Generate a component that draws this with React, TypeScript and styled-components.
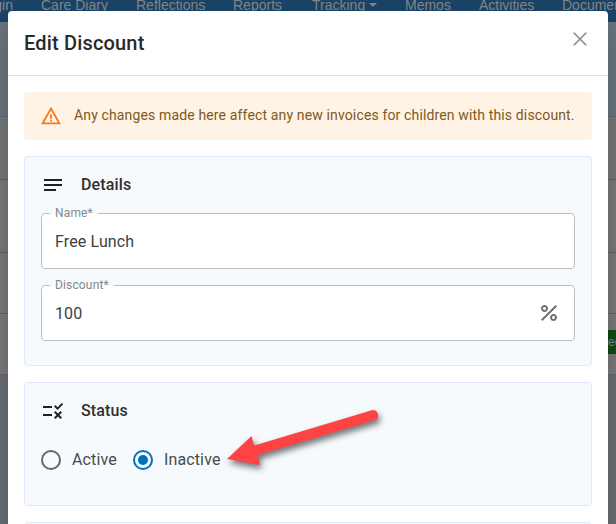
import React from "react";
import styled, { createGlobalStyle } from "styled-components";
import { MdNotes, MdPercent, MdRule, MdWarningAmber } from "react-icons/md";

const GlobalStyle = createGlobalStyle`
  *, *::before, *::after { box-sizing: border-box; }
  body { margin: 0; overflow: hidden; font-family: Roboto, sans-serif; }
`;

const Page = styled.div`
  position: relative;
  width: 616px;
  height: 524px;
  overflow: hidden;
  background: #6a7074;
`;

const NavBar = styled.nav`
  display: flex;
  gap: 28px;
  height: 22px;
  overflow: hidden;
  background: #1b4569;
  color: #84888b;
  font: 14px/20px "Liberation Sans", Arial, sans-serif;
  white-space: nowrap;
`;

const NavItem = styled.a<{ $width: number }>`
  display: flex;
  flex: 0 0 ${(p) => p.$width}px;
  min-width: 0;
  height: 20px;
  margin-top: -5px;
`;

const FirstNavItem = styled(NavItem)`
  justify-content: flex-end;
`;

const Caret = styled.span`
  margin: 8px 0 0 4px;
  width: 8px;
  height: 4px;
  border: 4px solid transparent;
  border-top-color: #84888b;
  border-bottom: 0;
`;

const Band = styled.div<{ $height: number; $color: string; $line?: string }>`
  display: flex;
  justify-content: flex-end;
  align-items: flex-start;
  height: ${(p) => p.$height}px;
  background: ${(p) => p.$color};
  border-bottom: 1px solid ${(p) => p.$line ?? "#5f6061"};
`;

const GreenButton = styled.button`
  width: 40px;
  height: 24px;
  margin: 16px -24px 0 0;
  padding: 0 0 0 8px;
  border: 0;
  background: #134a16;
  color: #858a8d;
  font: 12px/24px "Liberation Sans", Arial, sans-serif;
  text-align: left;
`;

const Dialog = styled.section`
  position: absolute;
  top: 11px;
  left: 8px;
  width: 600px;
  height: 560px;
  border-radius: 4px;
  background: #fff;
  box-shadow: 0 11px 15px -7px rgba(0, 0, 0, 0.2), 0 24px 38px 3px rgba(0, 0, 0, 0.08),
    0 9px 46px 8px rgba(0, 0, 0, 0.05);
`;

const DialogHeader = styled.header`
  display: flex;
  justify-content: space-between;
  height: 65px;
  padding: 16px 20px 0 16px;
  border-bottom: 1px solid #e0e0e0;
`;

const Title = styled.h1`
  margin: 0;
  color: #2a2a2a;
  font-size: 20px;
  font-weight: 500;
  line-height: 32px;
  letter-spacing: 0.17px;
`;

const CloseButton = styled.button`
  display: flex;
  width: 16px;
  height: 16px;
  margin-top: 4px;
  padding: 0;
  border: 0;
  background: none;
`;

const DialogBody = styled.div`
  display: flex;
  flex-direction: column;
  gap: 16px;
  padding: 16px;
`;

const Alert = styled.div`
  display: flex;
  align-items: center;
  gap: 12px;
  height: 48px;
  padding: 0 16px;
  border-radius: 4px;
  background: #fff3e5;
  color: #805820;
  font-size: 14px;
  letter-spacing: 0.142px;
  white-space: nowrap;

  svg { color: #f47c20; flex: none; }
`;

const AlertText = styled.span`
  padding-bottom: 2px;
`;

const Card = styled.section<{ $height: number }>`
  flex: none;
  height: ${(p) => p.$height}px;
  padding: 16px;
  border: 1px solid #dfe8ff;
  border-radius: 4px;
  background: #f6fafd;
`;

const CardHeading = styled.h2`
  display: flex;
  align-items: center;
  gap: 16px;
  height: 24px;
  margin: 0;
  color: #212121;
  font-size: 16px;
  font-weight: 500;
  letter-spacing: 0.13px;
`;

const HeadingText = styled.span`
  padding-bottom: 2px;
  color: #303030;
`;

const FieldList = styled.div`
  display: flex;
  flex-direction: column;
  gap: 16px;
  margin-top: 16px;
`;

const Field = styled.label`
  position: relative;
  display: flex;
  align-items: center;
  justify-content: space-between;
  height: 56px;
  padding: 0 13px;
  border: 1px solid #bdbdbd;
  border-radius: 4px;
  background: #fff;
  color: #404040;
  font-size: 16px;
  letter-spacing: 0.13px;

  svg { color: #707070; }
`;

const FieldLabel = styled.span`
  position: absolute;
  top: -9px;
  left: 8px;
  padding: 0 5px;
  background: linear-gradient(#f6fafd 0 9px, #fff 9px);
  color: #85888a;
  font-size: 12px;
  line-height: 16px;
  letter-spacing: 0.15px;
`;

const RadioGroup = styled.div`
  display: flex;
  gap: 16px;
  margin-top: 26px;
`;

const RadioOption = styled.label`
  display: flex;
  align-items: center;
  gap: 11px;
  height: 22px;
  color: #4a4a4a;
  font-size: 16px;
  letter-spacing: 0.14px;
`;

const RadioText = styled.span`
  padding-bottom: 2px;
`;

const RadioMark = styled.span<{ $checked?: boolean }>`
  display: grid;
  place-items: center;
  width: 20px;
  height: 20px;
  border: 2px solid ${(p) => (p.$checked ? "#0071bc" : "#666")};
  border-radius: 50%;

  &::after {
    content: "";
    width: 10px;
    height: 10px;
    border-radius: 50%;
    background: ${(p) => (p.$checked ? "#0071bc" : "transparent")};
  }
`;

const Pointer = styled.svg`
  position: absolute;
  top: 400px;
  left: 220px;
  filter: drop-shadow(2px 4px 3px rgba(0, 0, 0, 0.55));
`;

const navItems = [
  { label: "Care Diary", width: 67 },
  { label: "Reflections", width: 69 },
  { label: "Reports", width: 51 },
  { label: "Tracking", width: 65, menu: true },
  { label: "Memos", width: 46 },
  { label: "Activities", width: 55 },
  { label: "Documents", width: 72 },
];

export default function App() {
  return (
    <Page>
      <GlobalStyle />
      <NavBar>
        <FirstNavItem $width={13}>Login</FirstNavItem>
        {navItems.map((item) => (
          <NavItem key={item.label} $width={item.width}>
            {item.label}
            {item.menu && <Caret />}
          </NavItem>
        ))}
      </NavBar>
      <Band $height={95} $color="#6a757d" $line="#5d697d" />
      <Band $height={63} $color="#767878" />
      <Band $height={73} $color="#797979" />
      <Band $height={61} $color="#7a7a7a" />
      <Band $height={61} $color="#7a7a7a" $line="#616877">
        <GreenButton>ed</GreenButton>
      </Band>

      <Dialog role="dialog" aria-label="Edit Discount">
        <DialogHeader>
          <Title>Edit Discount</Title>
          <CloseButton aria-label="Close">
            <svg width="16" height="16" viewBox="0 0 16 16">
              <path d="M1.7 1.7 14.3 14.3M14.3 1.7 1.7 14.3" stroke="#999" strokeWidth="1.8" />
            </svg>
          </CloseButton>
        </DialogHeader>
        <DialogBody>
          <Alert>
            <MdWarningAmber size={22} />
            <AlertText>Any changes made here affect any new invoices for children with this discount.</AlertText>
          </Alert>
          <Card $height={210}>
            <CardHeading>
              <MdNotes size={24} />
              <HeadingText>Details</HeadingText>
            </CardHeading>
            <FieldList>
              <Field>
                <FieldLabel>Name*</FieldLabel>
                Free Lunch
              </Field>
              <Field>
                <FieldLabel>Discount*</FieldLabel>
                100
                <MdPercent size={24} />
              </Field>
            </FieldList>
          </Card>
          <Card $height={124}>
            <CardHeading>
              <MdRule size={24} />
              <HeadingText>Status</HeadingText>
            </CardHeading>
            <RadioGroup>
              <RadioOption>
                <RadioMark />
                <RadioText>Active</RadioText>
              </RadioOption>
              <RadioOption>
                <RadioMark $checked />
                <RadioText>Inactive</RadioText>
              </RadioOption>
            </RadioGroup>
          </Card>
          <Card $height={124} />
        </DialogBody>
      </Dialog>

      <Pointer width="170" height="80" viewBox="220 400 170 80" aria-hidden="true">
        <path
          d="M227 459 251.5 436 254.3 445.5 371.8 410.2A5.2 5.2 0 0 1 374.8 420.1L257.5 455 260 465Z"
          fill="#ff4242"
        />
      </Pointer>
    </Page>
  );
}
